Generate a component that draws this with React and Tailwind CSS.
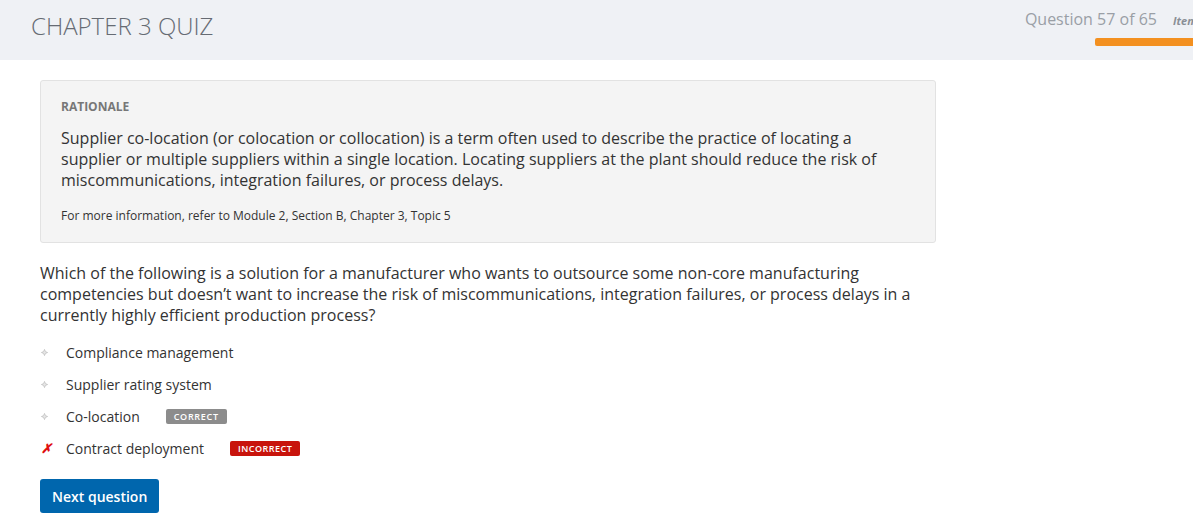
import React from 'react';

const options = [
  { label: 'Compliance management', mark: 'none' },
  { label: 'Supplier rating system', mark: 'none' },
  { label: 'Co-location', mark: 'none', badge: 'correct' },
  { label: 'Contract deployment', mark: 'wrong', badge: 'incorrect' },
];

const Bullet = () => (
  <svg width="7" height="7" viewBox="0 0 8 8" className="text-[#c4c4c4]">
    <path d="M4 0.5 L5 3 L7.5 4 L5 5 L4 7.5 L3 5 L0.5 4 L3 3 Z" fill="currentColor" fillOpacity="0.4" stroke="currentColor" strokeWidth="1" />
  </svg>
);

const App = () => {
  return (
    <div className="w-[1193px] h-[524px] overflow-hidden bg-white text-[#333] font-['Open_Sans',sans-serif]">
      {/* Header */}
      <div className="h-[60px] bg-[#eff1f5] flex justify-between">
        <h1 className="pl-[31px] pt-[11px] text-[24px] leading-[30px] font-light text-[#666b73]">
          CHAPTER 3 QUIZ
        </h1>
        <div className="flex flex-col items-end pt-[7px]">
          <div className="flex items-baseline gap-[16px] whitespace-nowrap">
            <span className="text-[16px] text-[#9a9fa6]">Question 57 of 65</span>
            <span className="text-[11px] italic font-bold text-[#8a8f96] w-[20px] overflow-hidden">Item</span>
          </div>
          <div className="mt-[7px] w-[98px] h-[8px] bg-[#f39020] rounded-l-[2px]"></div>
        </div>
      </div>

      <div className="px-[40px] w-[936px] box-content">
        {/* Rationale */}
        <div className="mt-[20px] w-[896px] bg-[#f4f4f4] border border-[#e2e2e2] rounded-[3px] px-[20px] pt-[17px] pb-[17px]">
          <p className="text-[12px] font-bold text-[#777] leading-[18px]">RATIONALE</p>
          <p className="mt-[12px] text-[16px] leading-[21px] text-[#333]">
            Supplier co-location (or colocation or collocation) is a term often used to describe the practice of locating a supplier or multiple suppliers within a single location. Locating suppliers at the plant should reduce the risk of miscommunications, integration failures, or process delays.
          </p>
          <p className="mt-[16px] text-[12px] leading-[18px] text-[#333]">
            For more information, refer to Module 2, Section B, Chapter 3, Topic 5
          </p>
        </div>

        {/* Question */}
        <p className="mt-[20px] w-[880px] text-[16px] leading-[21px] text-[#333]">
          Which of the following is a solution for a manufacturer who wants to outsource some non-core manufacturing competencies but doesn’t want to increase the risk of miscommunications, integration failures, or process delays in a currently highly efficient production process?
        </p>

        <ul className="mt-[16px] flex flex-col gap-[12px]">
          {options.map((o) => (
            <li key={o.label} className="flex items-center h-[20px] text-[14px]">
              <span className="w-[26px] flex items-center pl-[1px]">
                {o.mark === 'wrong' ? (
                  <span className="text-[#e0100f] font-bold italic text-[13px] leading-none">✗</span>
                ) : (
                  <Bullet />
                )}
              </span>
              <span className="text-[#333]">{o.label}</span>
              {o.badge === 'correct' && (
                <span className="ml-[26px] bg-[#8c8c8c] text-white text-[9px] font-semibold tracking-[0.7px] px-[8px] h-[15px] leading-[15px] rounded-[2px]">CORRECT</span>
              )}
              {o.badge === 'incorrect' && (
                <span className="ml-[26px] bg-[#c8140c] text-white text-[9px] font-semibold tracking-[0.5px] px-[8px] h-[15px] leading-[15px] rounded-[2px]">INCORRECT</span>
              )}
            </li>
          ))}
        </ul>

        <button className="mt-[21px] h-[34px] px-[12px] bg-[#0066ad] text-white text-[14px] font-semibold rounded-[3px]">
          Next question
        </button>
      </div>
    </div>
  );
};

export default App;
